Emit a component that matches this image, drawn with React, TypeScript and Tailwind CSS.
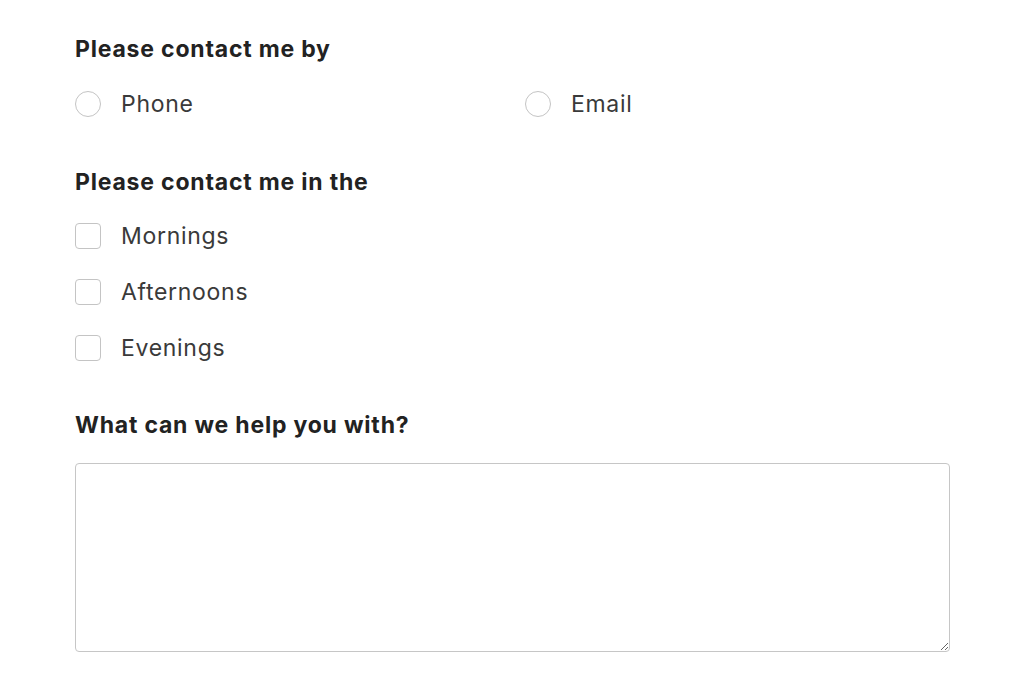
import React from "react";

const font = { fontFamily: "Inter, 'Noto Sans', sans-serif" };

const Heading = ({ children }: { children: React.ReactNode }) => (
  <h2 className="text-[23px] leading-[28px] font-bold text-[#222] tracking-[0.8px]">
    {children}
  </h2>
);

const Radio = ({ label }: { label: string }) => (
  <label className="flex items-center gap-[20px] cursor-pointer">
    <span className="w-[26px] h-[26px] rounded-full border-[1.5px] border-[#c4c4c4] bg-white" />
    <span className="text-[23px] leading-[26px] text-[#3a3a3a] tracking-[0.7px]">{label}</span>
  </label>
);

const Checkbox = ({ label }: { label: string }) => (
  <label className="flex items-center gap-[20px] cursor-pointer">
    <span className="w-[26px] h-[26px] rounded-[4px] border-[1.5px] border-[#c4c4c4] bg-white" />
    <span className="text-[23px] leading-[26px] text-[#3a3a3a] tracking-[0.7px]">{label}</span>
  </label>
);

export default function App() {
  return (
    <div
      className="min-h-screen bg-white pl-[75px] pt-[35px] w-[1024px] h-[675px] overflow-hidden"
      style={font}
    >
      <Heading>Please contact me by</Heading>
      <div className="flex mt-[28px]">
        <div className="w-[450px]">
          <Radio label="Phone" />
        </div>
        <Radio label="Email" />
      </div>

      <div className="mt-[51px]">
        <Heading>Please contact me in the</Heading>
      </div>
      <div className="flex flex-col gap-[30px] mt-[27px]">
        <Checkbox label="Mornings" />
        <Checkbox label="Afternoons" />
        <Checkbox label="Evenings" />
      </div>

      <div className="mt-[50px]">
        <Heading>What can we help you with?</Heading>
      </div>
      <textarea className="block mt-[24px] w-[875px] h-[189px] rounded-[4px] border-[1.5px] border-[#c6c6c6] bg-white outline-none p-3 text-[18px]" />
    </div>
  );
}
